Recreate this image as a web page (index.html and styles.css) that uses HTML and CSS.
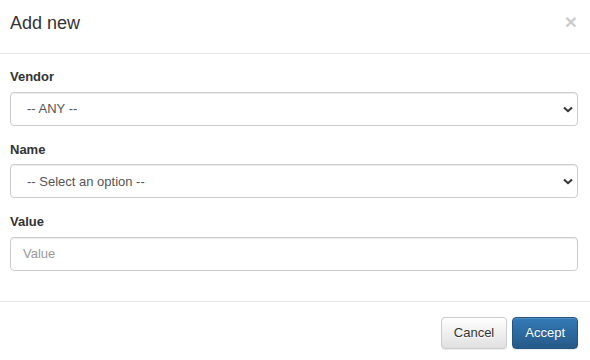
FILE: index.html
```html
<!DOCTYPE html>
<html>
<head>
<meta charset="utf-8">
<link rel="stylesheet" href="styles.css">
</head>
<body>
<div class="modal">
  <div class="modal-header">
    <span class="close">×</span>
    <h4 class="modal-title">Add new</h4>
  </div>
  <div class="modal-body">
    <div class="form-group">
      <label class="label">Vendor</label>
      <div class="select-wrap">
        <select class="form-control"><option>-- ANY --</option></select>
        <svg class="chev" width="10" height="7" viewBox="0 0 10 7"><path d="M1 1.5 L5 5.2 L9 1.5" fill="none" stroke="#333" stroke-width="2"/></svg>
      </div>
    </div>
    <div class="form-group">
      <label class="label">Name</label>
      <div class="select-wrap">
        <select class="form-control"><option>-- Select an option --</option></select>
        <svg class="chev" width="10" height="7" viewBox="0 0 10 7"><path d="M1 1.5 L5 5.2 L9 1.5" fill="none" stroke="#333" stroke-width="2"/></svg>
      </div>
    </div>
    <div class="form-group">
      <label class="label">Value</label>
      <input class="form-control input" type="text" placeholder="Value">
    </div>
  </div>
  <div class="modal-footer">
    <button class="btn btn-default">Cancel</button>
    <button class="btn btn-primary">Accept</button>
  </div>
</div>
</body>
</html>
```
FILE: styles.css
```css
html, body {
  margin: 0;
  padding: 0;
  background: #fff;
}
body {
  font-family: "Liberation Sans", Arial, sans-serif;
  font-size: 13px;
  line-height: 1.42857;
  color: #333;
}
.modal {
  width: 590px;
  background: #fff;
}
.modal-header {
  box-sizing: border-box;
  height: 54px;
  padding: 11px 12px 0 10px;
  border-bottom: 1px solid #e5e5e5;
}
.modal-title {
  margin: 0;
  font-size: 18px;
  font-weight: normal;
  line-height: 1.42857;
  color: #333;
}
.close {
  float: right;
  font-size: 21px;
  font-weight: bold;
  line-height: 1;
  color: #000;
  opacity: 0.2;
  margin-top: 0;
  margin-right: 1px;
}
.modal-body {
  padding: 14px 12px 15px 10px;
}
.form-group {
  margin-bottom: 15px;
}
.label {
  display: block;
  font-weight: bold;
  margin-bottom: 5px;
}
.select-wrap {
  position: relative;
}
.form-control {
  display: block;
  box-sizing: border-box;
  width: 100%;
  height: 34px;
  padding: 0 12px;
  font-family: inherit;
  font-size: 13px;
  color: #555;
  background: #fff;
  border: 1px solid #ccc;
  border-radius: 4px;
  box-shadow: inset 0 1px 1px rgba(0,0,0,.075);
  margin: 0;
}
select.form-control {
  -webkit-appearance: none;
  appearance: none;
  padding-left: 16px;
  color: #555;
}
.input::placeholder {
  color: #999;
}
.chev {
  position: absolute;
  right: 5px;
  top: 14px;
}
.modal-footer {
  border-top: 1px solid #e5e5e5;
  padding: 15px 12px 15px 10px;
  display: flex;
  justify-content: flex-end;
  gap: 5px;
}
.btn {
  font-family: inherit;
  font-size: 13px;
  line-height: 1.42857;
  padding: 6px 12px;
  border-radius: 4px;
  border: 1px solid transparent;
  margin: 0;
}
.btn-default {
  color: #333;
  background-image: linear-gradient(to bottom, #fff 0, #e0e0e0 100%);
  border-color: #ccc;
  text-shadow: 0 1px 0 #fff;
  box-shadow: inset 0 1px 0 rgba(255,255,255,.15), 0 1px 1px rgba(0,0,0,.075);
}
.btn-primary {
  color: #fff;
  background-image: linear-gradient(to bottom, #337ab7 0, #265a88 100%);
  border-color: #245580;
  text-shadow: 0 -1px 0 rgba(0,0,0,.2);
  box-shadow: inset 0 1px 0 rgba(255,255,255,.15), 0 1px 1px rgba(0,0,0,.075);
}
```
